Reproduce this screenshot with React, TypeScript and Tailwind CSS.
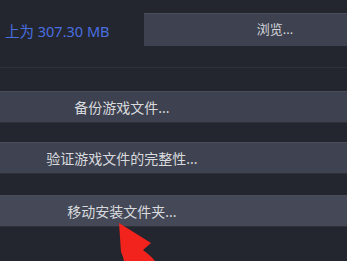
export default function App() {
  const buttons = [
    { label: "备份游戏文件...", top: "mt-[23px]", bg: "bg-[#3e4250]" },
    { label: "验证游戏文件的完整性...", top: "mt-[19px]", bg: "bg-[#3f4351]" },
    { label: "移动安装文件夹...", top: "mt-[21px]", bg: "bg-[#454957]" },
  ];

  return (
    <div
      className="relative h-[261px] w-[347px] overflow-hidden bg-[#23262e]"
      style={{ fontFamily: '"Noto Sans", "Noto Sans CJK SC", sans-serif' }}
    >
      <div className="flex h-[68px] items-start border-b border-[#2c3038]">
        <div className="mt-[21px] w-[144px] shrink-0 whitespace-nowrap pl-[5px] text-[14.5px] leading-[20px] text-[#4a6fe0]">
          上为 307.30 MB
        </div>
        <div className="mt-[13px] flex h-[33px] w-[262px] shrink-0 items-center justify-center border-t border-[#4a4e5b] bg-[#3e4250] text-[13px] text-[#d4d6da]">
          浏览...
        </div>
      </div>

      {buttons.map((b) => (
        <div
          key={b.label}
          className={`${b.top} flex h-[32px] w-full items-center border-t border-b border-t-[#4a4e5b] border-b-[#2e3139] ${b.bg}`}
        >
          <div className="w-[244px] text-center text-[14px] text-[#d8dade]">{b.label}</div>
        </div>
      ))}

      <svg className="absolute left-0 top-0" width="347" height="261" viewBox="0 0 347 261">
        <path d="M119 223 L151 243 L143 250 Q151 256 155 261 L124 261 Q123 256 121 252 Z" fill="#f2231c" />
      </svg>
    </div>
  );
}
